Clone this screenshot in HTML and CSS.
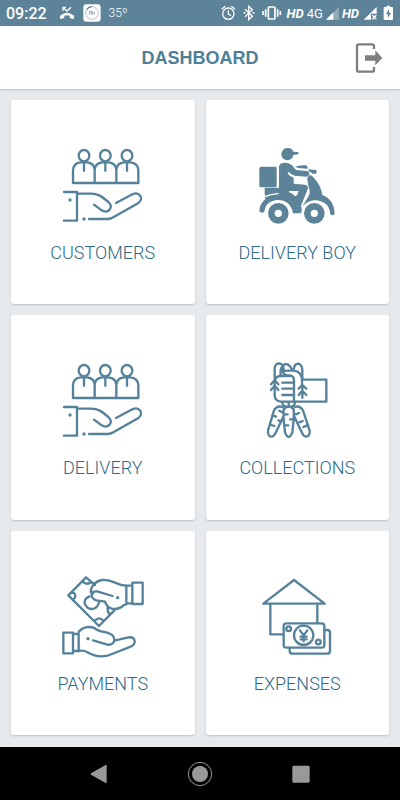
FILE: index.html
```html
<!DOCTYPE html>
<html lang="en">
<head>
<meta charset="utf-8">
<meta name="viewport" content="width=device-width, initial-scale=1">
<title>Dashboard</title>
<link rel="stylesheet" href="styles.css">
</head>
<body>
<div class="status">
  <div class="status-left">
    <span class="clock">09:22</span>
    <svg width="16" height="14" viewBox="0 0 48 42"><path d="M3 36Q1 32 5 28Q24 13 43 28Q47 32 45 36L42 40L32 35V29Q24 26 16 29V35L6 40Z" fill="#fff"/><path d="M12 14V4H21M13 5L24 15L36 4" fill="none" stroke="#fff" stroke-width="4"/></svg>
    <svg width="18" height="18" viewBox="0 0 54 54"><rect x="1" y="1" width="52" height="52" rx="9" fill="#fff"/><circle cx="27" cy="27" r="19" fill="none" stroke="#8ba5b5" stroke-width="2"/><path d="M11 17A19 19 0 0 1 26 8" fill="none" stroke="#5d8399" stroke-width="4"/><path d="M19 32V23H25V32M25 23H29V32M34 23V32" fill="none" stroke="#5d8399" stroke-width="2"/></svg>
    <span class="temp">35º</span>
  </div>
  <div class="status-right">
    <svg width="17" height="16" viewBox="0 0 51 48"><g fill="none" stroke="#fff" stroke-width="4"><circle cx="22" cy="26" r="17"/><path d="M22 16V27L30 32M2 13L13 4M42 13L31 4"/></g></svg>
    <svg width="17" height="16" viewBox="0 0 51 48"><path d="M12 13L34 34L23 44V4L34 14L12 35" fill="none" stroke="#fff" stroke-width="4"/><path d="M8 21h5v5H8zM35 21h5v5h-5z" fill="#fff"/></svg>
    <svg width="23" height="16" viewBox="0 0 69 48"><g fill="none" stroke="#fff" stroke-width="5"><rect x="22" y="6" width="20" height="36" rx="2"/><path d="M14 13V35M6 18V30M50 13V35M58 18V30"/></g></svg>
    <span class="hd">HD</span>
    <span class="net">4G</span>
    <svg width="13" height="16" viewBox="0 0 39 48"><path d="M0 44L39 6V44Z" fill="#91abba"/><path d="M0 44L22 22V44Z" fill="#fff"/></svg>
    <span class="hd">HD</span>
    <svg width="17" height="16" viewBox="0 0 51 48"><path d="M5 44L44 6V26H27V44Z" fill="#fff"/><path d="M31 31L43 43M43 31L31 43" stroke="#fff" stroke-width="4"/></svg>
    <svg width="12" height="16" viewBox="0 0 36 48"><path d="M8 6H14V2H24V6H30Q33 6 33 9V42Q33 45 30 45H8Q5 45 5 42V9Q5 6 8 6Z" fill="#fff"/><path d="M21 12L12 28H18V39L27 23H21Z" fill="#5d8399"/></svg>
  </div>
</div>
<header class="header">
  <h1>DASHBOARD</h1>
  <button class="logout" type="button" aria-label="Log out">
    <svg width="28" height="32" viewBox="0 0 84 96"><path d="M57 21V13Q57 7 51 7H12Q6 7 6 13V83Q6 89 12 89H51Q57 89 57 83V75" fill="none" stroke="#7f7f7f" stroke-width="7"/><path d="M30 40H61V25L82 48L61 70V56H30Z" fill="#7f7f7f"/></svg>
  </button>
</header>
<svg class="defs" aria-hidden="true">
  <symbol id="people" viewBox="-7 0 330 270">
    <ellipse cx="101" cy="47" rx="16" ry="17"/><ellipse cx="165" cy="47" rx="16" ry="17"/><ellipse cx="230" cy="47" rx="16" ry="17"/>
    <path d="M68 129V92Q69 68 92 67H110Q132 69 133 90V129M133 90Q134 69 156 67H174Q197 69 198 90V129M198 90Q199 69 221 67H239Q263 68 264 92V129H68M101 68V92M165 68V92M230 68V92"/>
    <path d="M41 156H80V242H41M80 161H122C148 161 158 173 174 186C193 203 172 222 154 211L131 194M116 237H172Q181 237 189 232L263 190C283 176 267 153 246 163L197 189"/>
    <circle class="dot" cx="59" cy="180" r="5"/><circle class="dot" cx="101" cy="237" r="5"/>
  </symbol>
</svg>
<main class="grid">
  <a class="card" href="#customers">
    <svg class="icon" viewBox="0 0 330 270"><use href="#people"/></svg>
    <span class="label">CUSTOMERS</span>
  </a>
  <a class="card" href="#delivery-boy">
    <svg class="icon solid" viewBox="37 0 330 270">
      <circle cx="173" cy="43" r="18"/><path d="M158 37Q160 24 175 24Q188 25 191 35L205 36Q209 38 205 43L190 45H160Z"/>
      <rect x="89" y="80" width="52" height="62" rx="5"/>
      <path d="M148 80Q149 68 165 68Q178 67 187 76L199 90L232 93Q240 95 239 102Q237 110 230 110L195 107Q184 104 178 97L175 100L192 113V131L226 134Q238 137 234 148L213 200L216 202V217Q215 220 210 220H190Q183 182 147 178Q128 178 112 188Q104 178 105 143H148Z"/>
      <path d="M196 80Q210 74 230 76Q235 80 234 86L205 84Z"/>
      <path d="M236 89Q240 87 246 89H259Q264 94 259 101H248L244 97L237 94Z"/>
      <path d="M240 105Q248 106 251 112Q275 138 278 165Q313 178 315 221Q310 229 302 223Q299 183 256 181Q233 182 218 200L238 166Q243 155 237 142L232 114Z"/>
      <circle class="cut" cx="146" cy="220" r="38"/><circle class="cut" cx="254" cy="220" r="38"/>
      <path d="M89 214Q91 171 145 166Q186 170 194 203L184 201Q174 181 145 180Q108 182 104 215Q97 222 89 214Z"/>
      <circle class="tyre" cx="146" cy="220" r="21"/><circle class="tyre" cx="254" cy="220" r="21"/>
      <path class="cut" d="M178 153H207L202 166L196 169Q190 160 178 157Z"/>
      <path class="gap" d="M176 99Q184 110 198 112L231 115M105 170Q124 162 145 161"/>
    </svg>
    <span class="label">DELIVERY BOY</span>
  </a>
  <a class="card" href="#delivery">
    <svg class="icon" viewBox="0 0 330 270"><use href="#people"/></svg>
    <span class="label">DELIVERY</span>
  </a>
  <a class="card" href="#collections">
    <svg class="icon" viewBox="37 3 330 270">
      <path d="M135 78V42Q137 28 149 28Q160 29 162 44M153 66Q151 45 158 37Q170 23 181 37L188 48M193 44Q194 29 206 29Q217 32 218 48V76"/>
      <path d="M160 45Q162 52 173 50H193Q216 53 217 78V94M160 45Q157 60 171 64H181Q193 66 193 80V143H153Q135 141 135 123V82Q137 66 153 66H180"/>
      <path d="M158 86H191M158 104H191M158 123H191M217 77H290V143H193"/>
      <path d="M124 91L135 79L146 91M124 108L135 95L146 108M207 104L218 93L230 104M207 123L218 110L230 123M218 94V131"/>
      <path d="M158 146Q160 158 171 158M196 146Q194 158 183 158M177 145V158"/>
      <path d="M162 166Q177 150 192 166Q194 187 188 235Q177 262 166 235Q160 187 162 166ZM159 159Q140 153 132 172L115 230Q114 248 125 248Q133 247 138 236L163 184M195 159Q212 153 221 172L240 230Q241 248 229 248Q221 247 217 236L192 184"/>
      <path d="M129 184L139 188M149 170L158 175M124 213L134 216M146 199L155 202M164 181H174M181 196H190M167 214H176M198 181L208 177M209 205L219 201M221 219L231 215"/>
    </svg>
    <span class="label">COLLECTIONS</span>
  </a>
  <a class="card" href="#payments">
    <svg class="icon" viewBox="-7 3 330 270">
      <path d="M134 45L107 22L54 76L146 168L192 121M96 34Q109 47 123 36M66 65Q84 76 67 90M132 154Q145 137 160 153M179 134Q170 124 172 112M118 79Q99 86 104 103Q114 124 135 114Q145 107 146 96"/>
      <path d="M228 46H218C195 42 182 27 155 30C135 34 125 48 122 59Q119 68 128 71M187 78L140 64Q127 63 124 72Q122 86 138 91L164 95C172 119 198 125 221 105L228 103M228 47H246V100H228ZM246 38H277V102H246Z"/>
      <path d="M39 188H68V250H39ZM68 192H85V243H68M85 186C98 169 119 168 134 175C148 189 176 183 188 198C199 216 184 228 169 223L128 211M192 212L234 202C256 200 260 221 241 230L185 252C159 264 132 259 111 247Q99 240 85 243"/>
      <circle class="dot" cx="202" cy="83" r="5"/><circle class="dot" cx="113" cy="206" r="5"/>
    </svg>
    <span class="label">PAYMENTS</span>
  </a>
  <a class="card" href="#expenses">
    <svg class="icon" viewBox="-8 3 330 270">
      <path d="M56 101L148 30L240 101ZM77 101V193H115M218 101V158"/>
      <path d="M239 180H247Q256 180 256 189V242Q256 251 247 251H144Q135 251 135 242V233"/>
      <rect x="117" y="160" width="122" height="73" rx="8"/>
      <circle cx="177" cy="196" r="29"/><circle cx="132" cy="176" r="7"/><circle cx="221" cy="216" r="7"/>
      <path d="M166 181L177 196L188 181M177 196V214M168 200H186M168 208H186"/>
    </svg>
    <span class="label">EXPENSES</span>
  </a>
</main>
<nav class="nav">
  <button type="button" aria-label="Back"><svg width="26" height="26" viewBox="0 0 78 78"><path d="M12 37L56 12Q59 11 59 14V64Q59 68 56 66L12 41Q9 39 12 37Z" fill="#999"/></svg></button>
  <button type="button" aria-label="Home"><svg width="26" height="26" viewBox="0 0 78 78"><circle cx="39" cy="39" r="35" fill="none" stroke="#999" stroke-width="3"/><circle cx="39" cy="39" r="24" fill="#999"/></svg></button>
  <button type="button" aria-label="Recent apps"><svg width="26" height="26" viewBox="0 0 78 78"><rect x="13" y="14" width="52" height="51" rx="4" fill="#999"/></svg></button>
</nav>
</body>
</html>
```
FILE: styles.css
```css
* { box-sizing: border-box; }

body {
  margin: 0;
  min-height: 100vh;
  display: flex;
  flex-direction: column;
  background: #e6eaed;
  font-family: Roboto, "Liberation Sans", sans-serif;
}

svg { display: block; flex: none; }

button {
  padding: 0;
  border: 0;
  background: none;
}

.defs { position: absolute; width: 0; height: 0; }

.status {
  display: flex;
  justify-content: space-between;
  align-items: center;
  height: 26px;
  padding: 0 6px;
  background: #5d8399;
  color: #fff;
}

.status-left { display: flex; align-items: center; gap: 8px; }
.status-right { display: flex; align-items: center; gap: 3px; }
.clock { margin-right: 4px; font-size: 16px; font-weight: 500; }
.temp { font-size: 12px; font-weight: 300; }
.hd { font-size: 13px; font-weight: 700; font-style: italic; }
.net { font-size: 13px; }

.header {
  display: grid;
  grid-template-columns: 1fr auto 1fr;
  align-items: center;
  height: 63px;
  padding: 0 17px;
  background: #fff;
  box-shadow: 0 1px 2px #bfc4c8;
}

h1 {
  grid-column: 2;
  margin: 0;
  color: #4d7f98;
  font: 700 18px/22px "Liberation Sans", sans-serif;
}

.logout { justify-self: end; }

.grid {
  flex: 1;
  display: grid;
  grid-template-columns: 1fr 1fr;
  grid-auto-rows: 1fr;
  gap: 11px;
  padding: 11px 11px 12px;
}

.card {
  display: flex;
  flex-direction: column;
  align-items: center;
  justify-content: center;
  gap: 12px;
  border-radius: 3px;
  background: #fff;
  box-shadow: 0 1px 2px #b9bfc3;
  color: #2e6a87;
  text-decoration: none;
}

.icon {
  width: 110px;
  height: 90px;
  fill: none;
  stroke: #55829a;
  stroke-width: 7px;
  stroke-linecap: round;
  stroke-linejoin: round;
}

.dot { fill: #55829a; stroke: none; }

.solid { fill: #5d8399; stroke: none; }
.cut { fill: #fff; }
.tyre { fill: none; stroke: #5d8399; stroke-width: 20px; }
.gap { fill: none; stroke: #fff; stroke-width: 4px; }

.label { font-size: 18px; font-weight: 300; line-height: 22px; }

.nav {
  display: flex;
  justify-content: space-evenly;
  align-items: center;
  height: 53px;
  padding: 0 12px;
  background: #000;
}
```
